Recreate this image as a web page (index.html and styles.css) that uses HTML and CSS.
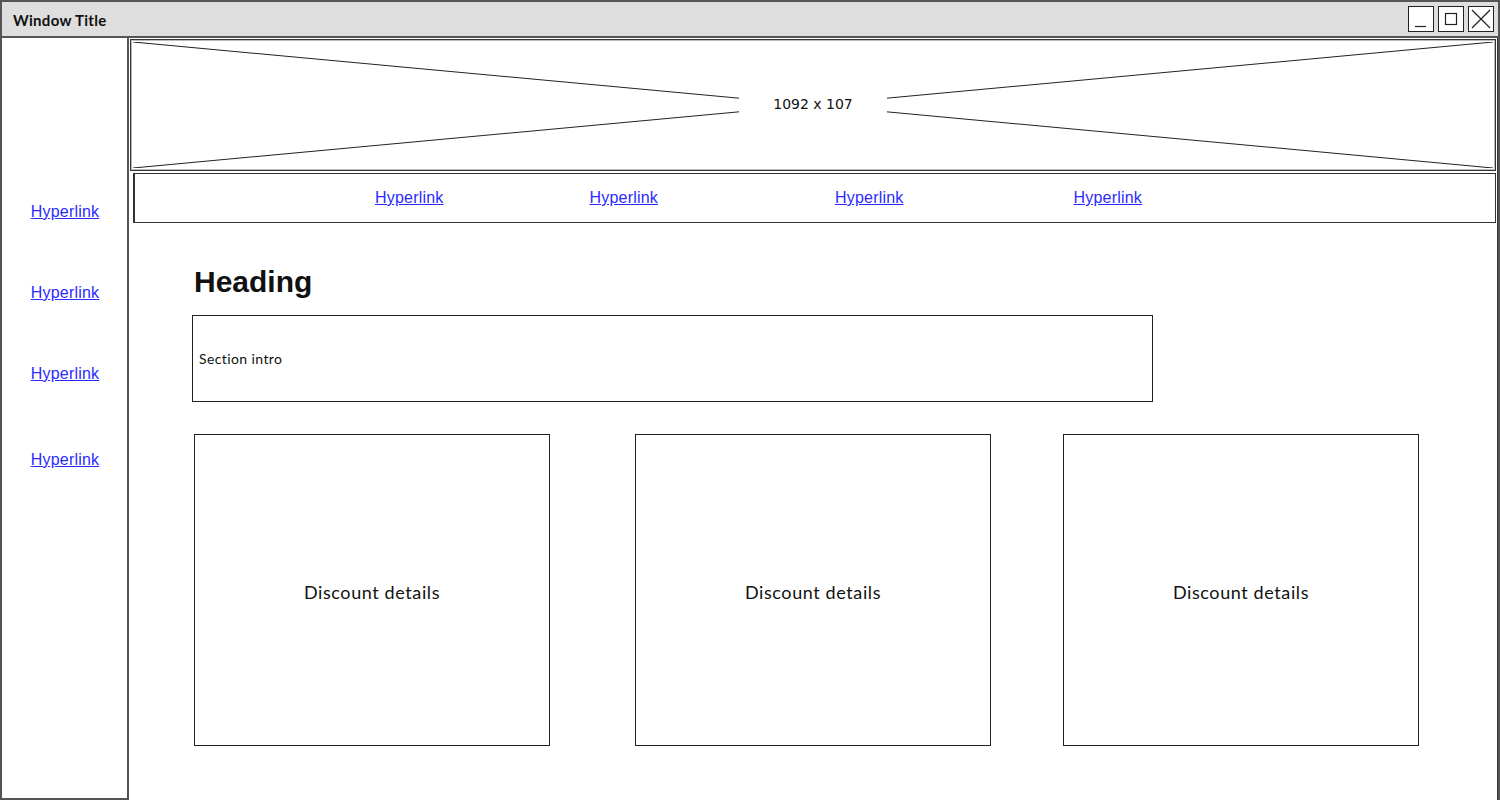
FILE: index.html
```html
<!DOCTYPE html>
<html lang="en">
<head>
    <meta charset="utf-8" />
    <title>Window Title</title>
    <meta name="viewport" content="width=device-width, initial-scale=1" />
<link rel="stylesheet" href="styles.css">
</head>
<body>
<div class="window">
  <div class="titlebar">
    <span class="title">Window Title</span>
    <div class="controls">
      <span class="ctl">
        <svg width="24" height="24" viewBox="0 0 24 24"><line x1="6" y1="19.5" x2="17" y2="19.5" stroke="#222" stroke-width="1.2"/></svg>
      </span>
      <span class="ctl">
        <svg width="24" height="24" viewBox="0 0 24 24"><rect x="6.5" y="6.5" width="11" height="11" fill="none" stroke="#222" stroke-width="1.2"/></svg>
      </span>
      <span class="ctl">
        <svg width="24" height="24" viewBox="0 0 24 24"><path d="M3 3 L21 21 M21 3 L3 21" stroke="#222" stroke-width="1.2" fill="none"/></svg>
      </span>
    </div>
  </div>

  <div class="frame">
    <ul class="sidebar">
      <li><a href="#">Hyperlink</a></li>
      <li><a href="#">Hyperlink</a></li>
      <li><a href="#">Hyperlink</a></li>
      <li><a href="#">Hyperlink</a></li>
    </ul>

    <div class="main">
      <div class="banner">
        <svg class="cross" preserveAspectRatio="none" viewBox="0 0 100 100">
          <line x1="0" y1="0" x2="100" y2="100" vector-effect="non-scaling-stroke" />
          <line x1="0" y1="100" x2="100" y2="0" vector-effect="non-scaling-stroke" />
        </svg>
        <span class="banner-label">1092 x 107</span>
      </div>

      <nav class="topnav">
        <a href="#">Hyperlink</a>
        <a href="#">Hyperlink</a>
        <a href="#">Hyperlink</a>
        <a href="#">Hyperlink</a>
      </nav>

      <div class="content">
        <h1>Heading</h1>
        <div class="intro">Section intro</div>
        <div class="cards">
          <div class="card">Discount details</div>
          <div class="card">Discount details</div>
          <div class="card">Discount details</div>
        </div>
      </div>
    </div>
  </div>
</div>
</body>
</html>
```

FILE: styles.css
```css
html, body {
    margin: 0;
    background-color: #fff;
}

body {
    font-family: "Lato", "DejaVu Sans", sans-serif;
    color: #111;
}

a {
    color: #2b2bff;
    font-family: "Liberation Sans", Arial, sans-serif;
    font-size: 16px;
    letter-spacing: 0.2px;
}

.window {
    box-sizing: border-box;
    width: 1500px;
    height: 800px;
    border: 2px solid #555;
    border-bottom: none;
    display: flex;
    flex-direction: column;
    overflow: hidden;
}

.titlebar {
    height: 34px;
    background-color: #dedede;
    border-bottom: 2px solid #555;
    display: flex;
    align-items: center;
    justify-content: space-between;
    padding: 0 4px 0 11px;
}

.title {
    font-size: 15px;
    font-weight: 700;
    letter-spacing: 0.3px;
    margin-top: 1px;
}

.controls {
    display: flex;
    gap: 4px;
}

.ctl {
    width: 24px;
    height: 24px;
    border: 1px solid #222;
    background-color: #fff;
    display: block;
}

.ctl svg {
    display: block;
}

.frame {
    flex: 1;
    display: flex;
}

.sidebar {
    box-sizing: border-box;
    width: 127px;
    height: 762px;
    margin: 0;
    padding: 163px 0 0 1px;
    list-style: none;
    border-right: 2px solid #555;
    border-bottom: 2px solid #555;
    text-align: center;
}

.sidebar li {
    height: 18px;
    margin-bottom: 63px;
}

.sidebar li:nth-child(3) {
    margin-bottom: 68px;
}

.main {
    flex: 1;
    display: flex;
    flex-direction: column;
    border-right: 1px solid #333;
}

.banner {
    position: relative;
    height: 130px;
    margin: 1px 1px 0 1px;
    border: 1px solid #333;
    box-shadow: inset 0 0 0 1px #bbb;
    display: flex;
    align-items: center;
    justify-content: center;
}

.cross {
    position: absolute;
    left: 2px;
    top: 2px;
    width: calc(100% - 4px);
    height: calc(100% - 4px);
}

.cross line {
    stroke: #222;
    stroke-width: 1;
}

.banner-label {
    position: relative;
    background-color: #fff;
    font-family: "DejaVu Sans", sans-serif;
    font-size: 14px;
    padding: 2px 34px;
    margin-top: -3px;
}

.topnav {
    height: 48px;
    margin: 2px 1px 0 4px;
    border: 1px solid #333;
    border-width: 1px 1px 1px 2px;
    display: flex;
    align-items: center;
    padding-left: 240px;
}

.topnav a:nth-child(2) {
    margin-left: 146px;
}

.topnav a:nth-child(3) {
    margin-left: 177px;
}

.topnav a:nth-child(4) {
    margin-left: 170px;
}

.content {
    padding-left: 63px;
}

h1 {
    font-family: "Liberation Sans", Arial, sans-serif;
    font-size: 30px;
    font-weight: 700;
    line-height: 34px;
    margin: 42px 0 0 2px;
}

.intro {
    box-sizing: border-box;
    width: 961px;
    height: 87px;
    margin-top: 16px;
    border: 1px solid #222;
    display: flex;
    align-items: center;
    padding: 0 6px;
    font-size: 14px;
    letter-spacing: 0.4px;
}

.cards {
    display: flex;
    margin-top: 32px;
    margin-left: 2px;
}

.card {
    box-sizing: border-box;
    width: 356px;
    height: 312px;
    border: 1px solid #222;
    display: flex;
    align-items: center;
    justify-content: center;
    padding-top: 4px;
    font-size: 18px;
    letter-spacing: 0.6px;
}

.card:nth-child(2) {
    margin-left: 85px;
}

.card:nth-child(3) {
    margin-left: 72px;
}
```
